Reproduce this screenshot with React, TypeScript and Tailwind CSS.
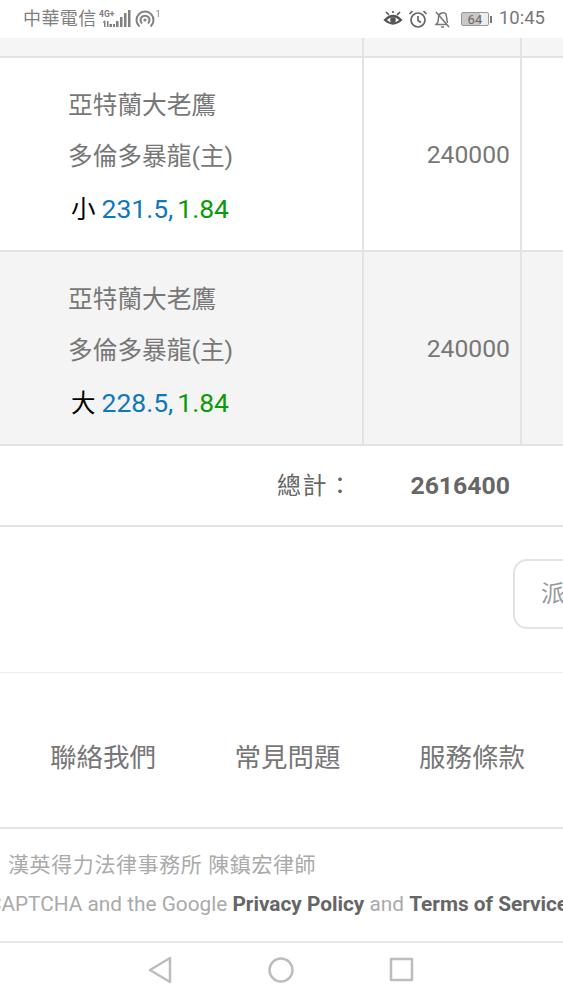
const cjk = '[font-family:Roboto,"Noto_Sans_CJK_TC",sans-serif]'

function StatusBar() {
  return (
    <div className="h-[38px] flex items-center justify-between pl-[23px] pr-[18px] bg-white text-[#808080]">
      <div className="flex items-center">
        <span className="text-[18px] leading-none tracking-[0.4px]">中華電信</span>
        <svg width="32" height="22" viewBox="0 0 32 22" className="ml-[2px] mt-[1px]" fill="#808080">
          <text x="0" y="8" fontSize="8.5" fontWeight="700" fontFamily="Roboto">4G+</text>
          <path d="M5 12h1.5v6H5zM3.5 13.5L5.7 11l0 3zM8 12h1.5v6H8z" />
          <rect x="10.5" y="15" width="2.5" height="3" />
          <rect x="14" y="15" width="2" height="3" />
          <rect x="17" y="12" width="2.5" height="6" />
          <rect x="21" y="8" width="2.5" height="10" />
          <rect x="25" y="4" width="2.5" height="14" />
          <rect x="29" y="1" width="2.5" height="17" />
        </svg>
        <svg width="20" height="18" viewBox="0 0 20 18" className="ml-[4px]" fill="none" stroke="#808080" strokeWidth="2">
          <path d="M4.5 16.5a8.5 8.5 0 1 1 11 0" />
          <path d="M7 13.5a4.5 4.5 0 1 1 6 0" />
          <circle cx="10" cy="10" r="1.6" fill="#808080" stroke="none" />
        </svg>
        <span className="text-[9px] mb-[10px] ml-[1px] leading-none">1</span>
      </div>
      <div className="flex items-center">
        <svg width="20" height="18" viewBox="0 0 20 18" fill="none" stroke="#555" strokeWidth="2.2">
          <path d="M2 10q8-8 16 0q-8 7-16 0z" />
          <circle cx="10" cy="10" r="2.8" fill="#555" stroke="none" />
          <path d="M3 2l3 3M17 2l-3 3M10 1v2" strokeWidth="1.6" />
        </svg>
        <svg width="20" height="20" viewBox="0 0 20 20" fill="none" stroke="#666" strokeWidth="1.7" className="ml-[5px]">
          <circle cx="10" cy="11" r="7" />
          <path d="M10 7v4.5l3 2M1.5 5l3-3M18.5 5l-3-3" />
        </svg>
        <svg width="20" height="20" viewBox="0 0 20 20" fill="none" stroke="#777" strokeWidth="1.5" className="ml-[5px]">
          <path d="M5.5 8.5A4.5 4.5 0 0 1 13 5l1.5 9M5.5 8.5L5 13l-2 2.5h11M8 18h3" />
          <path d="M3 3l13 15" />
        </svg>
        <div className="ml-[8px] w-[28px] h-[14px] border border-[#999] rounded-[2px] bg-[linear-gradient(90deg,#c8c8c8_70%,#eeeeee_70%)] flex items-center justify-center text-[13px] leading-none text-[#666]">64</div>
        <div className="w-[2px] h-[7px] bg-[#777] ml-[1px]" />
        <span className="ml-[7px] text-[18.5px] text-[#777] [font-family:Roboto,sans-serif]">10:45</span>
      </div>
    </div>
  )
}

function BetRow({ side, line, odds, shaded }: { side: string; line: string; odds: string; shaded?: boolean }) {
  return (
    <div className={`flex h-[194px] border-b-2 border-[#e3e3e3] ${shaded ? 'bg-[#f4f4f4]' : 'bg-white'}`}>
      <div className="w-[362px] pl-[68px] pt-[28px] text-[24.7px] text-[#777]">
        <div className="h-[50px] leading-[40px]">亞特蘭大老鷹</div>
        <div className="h-[52px] leading-[41px]">多倫多暴龍(主)</div>
        <div className="flex items-baseline leading-[42px] pl-[3px] text-[26.5px]">
          <span className="text-black text-[24.5px] mr-[6px]">{side}</span>
          <span className="text-[#0e78bd]">{line},</span>
          <span className="text-[#0a9a0a] ml-[4px]">{odds}</span>
        </div>
      </div>
      <div className="w-[160px] border-x-2 border-[#e3e3e3] flex items-center justify-end pr-[10px] pt-[2px] text-[24.7px] text-[#777]">240000</div>
    </div>
  )
}

export default function App() {
  return (
    <div className={`w-[563px] h-[1000px] overflow-hidden bg-white ${cjk}`}>
      <StatusBar />

      <div className="h-[20px] flex bg-[#f5f5f5] border-b-2 border-[#e3e3e3]">
        <div className="w-[362px]" />
        <div className="w-[160px] border-x-2 border-[#e3e3e3]" />
      </div>
      <BetRow side="小" line="231.5" odds="1.84" />
      <BetRow side="大" line="228.5" odds="1.84" shaded />

      <div className="h-[81px] flex items-center justify-end pr-[53px] pt-[1px] border-b-2 border-[#e3e3e3] text-[#666] text-[24px]">
        <span className="mr-[57px] tracking-[1.5px]">總計：</span>
        <span className="font-bold text-[24.8px]">2616400</span>
      </div>

      <div className="h-[146px] flex items-center border-b border-[#ececec] pl-[513px] pb-[12px]">
        <div className="shrink-0 w-[120px] h-[70px] border-2 border-[#e3e3e3] rounded-[14px] flex items-center pl-[26px] text-[24px] text-[#999]">派單</div>
      </div>

      <div className="h-[156px] flex items-center justify-between pl-[50px] pr-[38px] pt-[16px] border-b-2 border-[#e3e3e3] text-[26.5px] text-[#777]">
        <span>聯絡我們</span>
        <span>常見問題</span>
        <span>服務條款</span>
      </div>

      <div className="h-[112px] pt-[22px] whitespace-nowrap text-[#aaa]">
        <div className="pl-[8px] text-[21px] leading-[28px] tracking-[0.6px]">漢英得力法律事務所 陳鎮宏律師</div>
        <div className="ml-[-30px] mt-[11px] text-[20.8px] leading-[28px]">
          reCAPTCHA and the Google <b className="text-[#666]">Privacy Policy</b> and <b className="text-[#666]">Terms of Service</b>
        </div>
      </div>

      <div className="h-[58px] border-t-2 border-[#e8e8e8] flex items-center justify-center gap-[95px] pb-[3px] pr-[3px]">
        <svg width="26" height="28" viewBox="0 0 26 28" fill="none" stroke="#bdbdbd" strokeWidth="2.5" strokeLinejoin="round">
          <path d="M23 2v24L3 14z" />
        </svg>
        <svg width="26" height="26" viewBox="0 0 26 26" fill="none" stroke="#bdbdbd" strokeWidth="2.5">
          <circle cx="13" cy="13" r="11.5" />
        </svg>
        <svg width="25" height="25" viewBox="0 0 25 25" fill="none" stroke="#bdbdbd" strokeWidth="2.5" strokeLinejoin="round">
          <rect x="2" y="2" width="21" height="21" />
        </svg>
      </div>
    </div>
  )
}
